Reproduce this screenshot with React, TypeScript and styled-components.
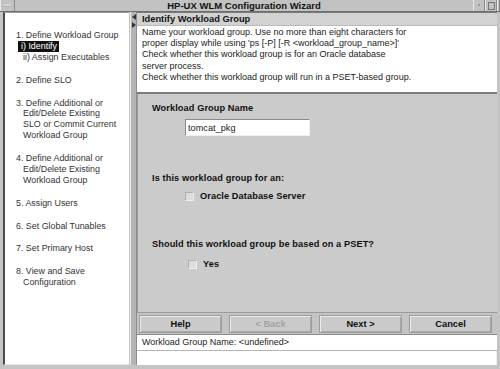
import React from 'react';
import styled, { createGlobalStyle } from 'styled-components';

const GlobalStyle = createGlobalStyle`
    html, body {
        margin: 0;
        padding: 0;
        background: #c4c4c4;
    }
    body {
        font-family: 'Liberation Sans', Arial, sans-serif;
        font-size: 9.3px;
        color: #111;
    }
`;

const Window = styled.div`
    width: 500px;
    height: 369px;
    display: flex;
    flex-direction: column;
    background: #c4c4c4;
    overflow: hidden;
`;

const TitleBar = styled.div`
    height: 11px;
    display: flex;
    align-items: stretch;
    border-bottom: 1px solid #6e6e6e;
    background: #c2c2c2;
`;

const TitleButton = styled.div<{ $w: number }>`
    width: ${p => p.$w}px;
    display: flex;
    align-items: center;
    justify-content: center;
    border-left: 1px solid #eaeaea;
    border-right: 1px solid #8a8a8a;
    box-sizing: border-box;
`;

const Title = styled.div`
    flex: 1;
    text-align: center;
    font-weight: bold;
    font-size: 9.5px;
    line-height: 11px;
`;

const Body = styled.div`
    flex: 1;
    display: flex;
    padding: 0 3px 4px 3px;
    min-height: 0;
`;

const StepList = styled.div`
    width: 126px;
    background: #fff;
    border-left: 2px solid #4a4a4a;
    border-top: 1px solid #9a9a9a;
    border-bottom: 1px solid #e8e8e8;
    box-sizing: border-box;
    padding: 17px 0 0 11px;
    font-size: 8.9px;
    line-height: 10.8px;
    color: #333;
`;

const Step = styled.div`
    margin-bottom: 12.2px;
`;

const StepLine = styled.div<{ $indent?: number }>`
    padding-left: ${p => p.$indent ?? 0}px;
    white-space: nowrap;
`;

const Current = styled.span`
    display: inline-block;
    margin-left: 2px;
    padding: 0 2px 0 3px;
    background: #111;
    color: #fff;
`;

const Splitter = styled.div`
    width: 7px;
    margin-left: 1px;
    background-color: #cfcfcf;
    background-image: radial-gradient(circle, #a5a5a5 0.6px, transparent 0.9px);
    background-size: 2px 2px;
    border-left: 1px solid #eaeaea;
    border-right: 1px solid #8d8d8d;
    box-sizing: border-box;
    display: flex;
    flex-direction: column;
    align-items: center;
    padding-top: 2px;
    gap: 2px;
`;

const Main = styled.div`
    flex: 1;
    display: flex;
    flex-direction: column;
    border-top: 1px solid #7a7a7a;
    min-width: 0;
`;

const PageHeader = styled.div`
    height: 12px;
    line-height: 12px;
    padding-left: 5px;
    font-weight: bold;
    font-size: 9.3px;
    background: #d2d2d2;
    border-bottom: 1px solid #bbb;
`;

const Intro = styled.div`
    height: 65px;
    background: #fff;
    padding: 1px 5px 0;
    font-size: 9px;
    line-height: 11.2px;
    border-bottom: 2px solid #7c7c7c;
    color: #222;
`;

const Form = styled.div`
    flex: 1;
    background: #cbcbcb;
    border-left: 1px solid #9a9a9a;
    border-bottom: 1px solid #9a9a9a;
    padding: 9px 0 0 14px;
    font-size: 9.2px;
`;

const Label = styled.div<{ $top: number }>`
    margin-top: ${p => p.$top}px;
    font-weight: bold;
    line-height: 11px;
    letter-spacing: 0.1px;
`;

const NameInput = styled.input`
    display: block;
    margin: 5px 0 0 33px;
    width: 125px;
    height: 17px;
    box-sizing: border-box;
    border: 1px solid #8a8a8a;
    border-right-color: #eee;
    border-bottom-color: #eee;
    background: #fff;
    padding: 0 2px;
    font-family: 'Liberation Sans', Arial, sans-serif;
    font-size: 9.2px;
    color: #222;
    outline: none;
`;

const CheckRow = styled.label<{ $top: number; $indent: number }>`
    display: flex;
    align-items: center;
    gap: 6px;
    margin: ${p => p.$top}px 0 0 ${p => p.$indent}px;
    font-weight: bold;
    line-height: 11px;
    letter-spacing: 0.1px;
`;

const Box = styled.span`
    width: 7px;
    height: 7px;
    background: #dcdcdc;
    border: 1px solid #b0b0b0;
    border-right-color: #f0f0f0;
    border-bottom-color: #f0f0f0;
`;

const ButtonBar = styled.div`
    display: grid;
    grid-template-columns: repeat(4, 83px);
    gap: 7px;
    padding: 2px 0 1px 2px;
    background: #c4c4c4;
`;

const WizButton = styled.button<{ $disabled?: boolean }>`
    height: 18px;
    box-sizing: border-box;
    background: #cacaca;
    border: 1px solid #9c9c9c;
    box-shadow: inset 1px 1px 0 #ececec, inset -1px -1px 0 #a8a8a8;
    font-family: 'Liberation Sans', Arial, sans-serif;
    font-weight: bold;
    font-size: 9.3px;
    color: ${p => (p.$disabled ? '#a2a2a2' : '#111')};
    padding: 0;
`;

const Status = styled.div`
    height: 15px;
    line-height: 15px;
    background: #fff;
    border-top: 1px solid #8c8c8c;
    border-bottom: 1px solid #b4b4b4;
    padding-left: 5px;
    font-size: 9px;
    color: #222;
`;

const StatusFiller = styled.div`
    height: 14px;
    background: #fff;
    border-right: 1px solid #eee;
`;

const Arrow = ({ dir }: { dir: 'left' | 'right' }) => (
    <svg width="4" height="6" viewBox="0 0 4 6">
        <path d={dir === 'left' ? 'M4 0 L0 3 L4 6 Z' : 'M0 0 L4 3 L0 6 Z'} fill="#333" />
    </svg>
);

const steps: { lines: string[]; sub?: { text: string; current?: boolean }[] }[] = [
    {
        lines: ['1. Define Workload Group'],
        sub: [{ text: 'i) Identify', current: true }, { text: 'ii) Assign Executables' }],
    },
    { lines: ['2. Define SLO'] },
    { lines: ['3. Define Additional or', 'Edit/Delete Existing', 'SLO or Commit Current', 'Workload Group'] },
    { lines: ['4. Define Additional or', 'Edit/Delete Existing', 'Workload Group'] },
    { lines: ['5. Assign Users'] },
    { lines: ['6. Set Global Tunables'] },
    { lines: ['7. Set Primary Host'] },
    { lines: ['8. View and Save', 'Configuration'] },
];

const App: React.FC = () => {
    return (
        <>
            <GlobalStyle />
            <Window>
                <TitleBar>
                    <TitleButton $w={15}>
                        <svg width="9" height="3" viewBox="0 0 9 3">
                            <rect x="0" y="0" width="9" height="2" fill="#eee" stroke="#888" strokeWidth="0.5" />
                        </svg>
                    </TitleButton>
                    <Title>HP-UX WLM Configuration Wizard</Title>
                    <TitleButton $w={12}>
                        <svg width="3" height="3" viewBox="0 0 3 3">
                            <rect x="0" y="0" width="2" height="2" fill="#999" />
                        </svg>
                    </TitleButton>
                    <TitleButton $w={12}>
                        <svg width="7" height="8" viewBox="0 0 7 8">
                            <rect x="0.5" y="0.5" width="6" height="7" fill="none" stroke="#777" />
                        </svg>
                    </TitleButton>
                    <TitleButton $w={3} />
                </TitleBar>
                <Body>
                    <StepList>
                        {steps.map((s, i) => (
                            <Step key={i}>
                                {s.lines.map((l, j) => (
                                    <StepLine key={j} $indent={j > 0 ? 7 : 0}>
                                        {l}
                                    </StepLine>
                                ))}
                                {s.sub?.map(sub =>
                                    sub.current ? (
                                        <StepLine key={sub.text}>
                                            <Current>{sub.text}</Current>
                                        </StepLine>
                                    ) : (
                                        <StepLine key={sub.text} $indent={7}>
                                            {sub.text}
                                        </StepLine>
                                    )
                                )}
                            </Step>
                        ))}
                    </StepList>
                    <Splitter>
                        <Arrow dir="left" />
                        <Arrow dir="right" />
                    </Splitter>
                    <Main>
                        <PageHeader>Identify Workload Group</PageHeader>
                        <Intro>
                            Name your workload group. Use no more than eight characters for
                            <br />
                            proper display while using 'ps [-P] [-R &lt;workload_group_name&gt;]'
                            <br />
                            Check whether this workload group is for an Oracle database
                            <br />
                            server process.
                            <br />
                            Check whether this workload group will run in a PSET-based group.
                        </Intro>
                        <Form>
                            <Label $top={0}>Workload Group Name</Label>
                            <NameInput defaultValue="tomcat_pkg" />
                            <Label $top={37}>Is this workload group for an:</Label>
                            <CheckRow $top={7} $indent={33}>
                                <Box />
                                Oracle Database Server
                            </CheckRow>
                            <Label $top={37}>Should this workload group be based on a PSET?</Label>
                            <CheckRow $top={9} $indent={36}>
                                <Box />
                                Yes
                            </CheckRow>
                        </Form>
                        <ButtonBar>
                            <WizButton>Help</WizButton>
                            <WizButton $disabled>&lt; Back</WizButton>
                            <WizButton>Next &gt;</WizButton>
                            <WizButton>Cancel</WizButton>
                        </ButtonBar>
                        <Status>Workload Group Name: &lt;undefined&gt;</Status>
                        <StatusFiller />
                    </Main>
                </Body>
            </Window>
        </>
    );
};

export default App;
